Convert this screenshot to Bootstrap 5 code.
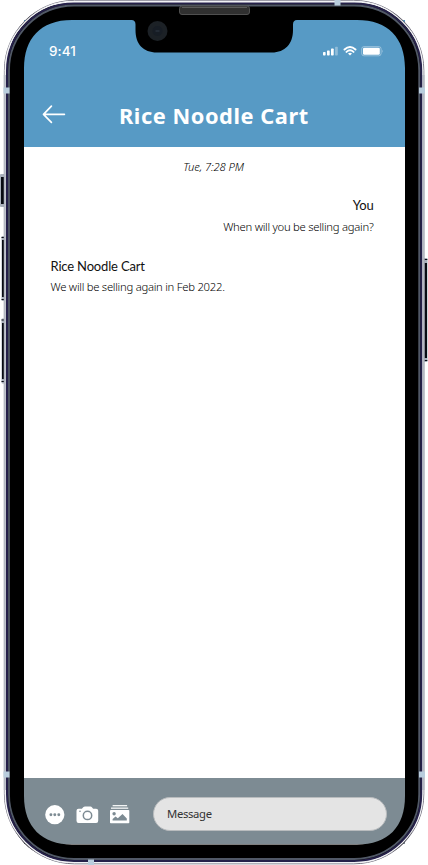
<!DOCTYPE html>
<html lang="en">
<head>
<meta charset="utf-8">
<meta name="viewport" content="width=device-width, initial-scale=1">
<title>Rice Noodle Cart</title>
<link href="https://cdn.jsdelivr.net/npm/bootstrap@5.3.0/dist/css/bootstrap.min.css" rel="stylesheet">
<style>
body{font-family:"Noto Sans",sans-serif;background:#fff}
.phone{width:428px;height:865px;padding:20px 23px 21px 24px}
.shell{left:0;top:0;width:428px;height:865px;pointer-events:none}
.screen{background:#fff}
.top-area{height:126.6px;background:#579ac5;color:#fff}
.status{height:62px;padding:0 22px 0 25px}
.clock{font:500 13.4px/1 Inter,sans-serif;letter-spacing:.1px;padding-top:1px}
.title-row{height:64px;padding-left:18px}
.title-row h1{font-size:21.8px;font-weight:700;letter-spacing:.55px;line-height:30px;padding-top:4px;width:190px;margin-left:53px}
.stamp{font-size:11.2px;letter-spacing:-.1px;line-height:15px;font-style:italic;font-weight:300;color:#000;margin-top:12.4px;padding-left:3px}
.who{font:400 13px/16px Lato,sans-serif;letter-spacing:-.17px;color:#111}
.words{font-size:11.3px;letter-spacing:-.26px;line-height:15px;font-weight:300;color:#000;margin-top:5.4px}
.thread{padding:0 31.5px 0 26.5px}
.mine{margin-top:23.2px}
.theirs{margin-top:24.2px}
.composer{height:65.6px;background:#7d8b93;padding:18.5px 18px 12px 20px}
.glyphs{margin-top:7px}
.field{width:234px;height:34px;border-radius:17px;border:1.5px solid #b9bcbe;background:#e4e4e4;font-size:11.3px;letter-spacing:-.35px;color:#333;padding-left:13px;line-height:31px}
</style>
</head>
<body>
<main class="phone position-relative overflow-hidden">
  <div class="screen d-flex flex-column h-100">
    <header class="top-area">
      <div class="status d-flex justify-content-between align-items-center">
        <span class="clock">9:41</span>
        <svg width="62" height="14" viewBox="321 44 62 14" fill="#fff">
          <rect x="323" y="52.1" width="2.6" height="3.4" rx=".7"/><rect x="327" y="50.4" width="2.7" height="5.1" rx=".7"/><rect x="331" y="48.6" width="2.7" height="6.9" rx=".7"/><rect x="335.1" y="46.8" width="2.7" height="8.7" rx=".7" opacity=".35"/>
          <path d="M344.5 49.5Q350 44.4 355.500 49.500M346.500 51.900Q350 48.800 353.500 51.900" fill="none" stroke="#fff" stroke-width="1.900" stroke-linecap="round"/><path d="M348 53.500Q350 52 352 53.500L350 55.500Z"/>
          <rect x="361.700" y="46.600" width="19.400" height="9.200" rx="2.300" fill="none" stroke="#fff" opacity=".38"/><rect x="363" y="47.800" width="16.800" height="6.900" rx="1.300"/><path d="M382 49.700q1.400 1.500 0 3z" opacity=".4"/>
        </svg>
      </div>
      <div class="title-row d-flex align-items-center">
        <svg width="24" height="20" viewBox="0 0 24 20" fill="none" stroke="#fff" stroke-width="1.7" stroke-linecap="round" stroke-linejoin="round"><path d="M22.4 10.300H1.700M9.400 2.100 1.500 10.300 9.400 18.300"/></svg>
        <h1 class="mb-0 text-nowrap">Rice Noodle Cart</h1>
      </div>
    </header>
    <section class="thread flex-grow-1">
      <p class="stamp text-center mb-0">Tue, 7:28 PM</p>
      <article class="mine text-end">
        <div class="who">You</div>
        <p class="words mb-0">When will you be selling again?</p>
      </article>
      <article class="theirs">
        <div class="who">Rice Noodle Cart</div>
        <p class="words mb-0">We will be selling again in Feb 2022.</p>
      </article>
    </section>
    <footer class="composer d-flex justify-content-between align-items-start">
      <svg width="86" height="22" viewBox="44 804 86 22" fill="#fff" class="glyphs">
        <circle cx="54.800" cy="814.700" r="9.600"/><g fill="#7d8b93"><circle cx="50.900" cy="814.700" r="1.450"/><circle cx="54.800" cy="814.700" r="1.450"/><circle cx="58.800" cy="814.700" r="1.450"/></g>
        <path d="M78.500 808.700h3.400l1.300-1.400q.8-.8 1.800-.8h5.400q1 0 1.700.9l1 1.300h3q2.100 0 2.100 2.100v10q0 2.200-2.100 2.200H78.600q-2.100 0-2.100-2.200v-10q0-2.100 2-2.100Z"/>
        <circle cx="87.500" cy="815.400" r="4.200" fill="none" stroke="#7d8b93" stroke-width="1.500"/><circle cx="80" cy="811.200" r=".8" fill="#7d8b93"/>
        <rect x="112.600" y="805.100" width="14.500" height="1.200"/><rect x="111" y="807.400" width="17.200" height="1.600" opacity=".75"/><rect x="110" y="809.900" width="19.300" height="13.300" rx=".8"/>
        <circle cx="114.100" cy="813.800" r="1.700" fill="#7d8b93"/><path d="M112.600 820.500v-1.400l3-2.600 2.200 1.800 4.700-4.300 4.300 4.400v2.100Z" fill="#7d8b93"/>
      </svg>
      <div class="field">Message</div>
    </footer>
  </div>
  <svg class="shell position-absolute" viewBox="0 0 428 865" fill="none">
    <!-- side buttons -->
    <g fill="#a9b0bb"><rect x="0" y="174" width="6" height="33" rx="1"/><rect x="1.5" y="236" width="5" height="65" rx="1"/><rect x="1.5" y="318.5" width="5" height="65" rx="1"/><rect x="423" y="258" width="4.5" height="104" rx="1"/></g>
    <g fill="#080b12"><path d="M1 177h3.500v27H1zM2 240h2.800v57H2zM2 323h2.800v56H2zM424.500 263h2.500v95h-2.500z"/><path d="M1.500 237h3v1h-3zM1.500 299h3v1h-3zM1.500 319.500h3v1h-3zM1.500 381h3v1h-3zM424.500 259h2.800v1h-2.800zM424.500 360h2.800v1h-2.800z"/></g>
    <!-- body ring between the outer edge and the screen opening -->
    <path fill="#000" fill-rule="evenodd" d="M74 3H354C398 3 421 29 421 74V792C421 836 398 861 354 861H74C30 861 7 836 7 792V74C7 29 30 3 74 3ZM72 20C40 20 24 39 24 68V796C24 827 42 844.500 72 844.500H357C388 844.500 405 827 405 796V68C405 38 388 20 357 20H297Q293 20 293 24.500V30C293 44 285 52.500 272 52.500H157C143 52.500 135.500 44 135.500 30V24.500Q135.500 20 131.500 20Z"/>
    <rect x="4.400" y=".4" width="419.400" height="863.400" rx="70" stroke="#62606f" stroke-width=".9"/>
    <rect x="5.300" y="1.600" width="417.400" height="861" rx="69" stroke="#f1f2f5" stroke-width="1.500"/>
    <path d="M4.800 75V790M423.500 75V790" stroke="#b4b8c2" stroke-width="2"/>
    <rect x="7" y="3.500" width="414.200" height="857.500" rx="67" stroke="#25204a" stroke-width="2"/>
    <rect x="9" y="5.500" width="410.200" height="853.500" rx="65" stroke="#515967" stroke-width="1.800"/>
    <g fill="#b9cddd"><path d="M3.500 87.500h6v6h-6zM419 87.500h6v6h-6zM3.500 771.500h6v6h-6zM419 771.500h6v6h-6zM334.500 0h6v5.500h-6zM88 859.500h6v5.500h-6z"/></g>
    <rect x="179.500" y="6" width="70" height="8.500" rx="2.500" fill="#303030" stroke="#505050"/><path d="M182 7.500h65" stroke="#5b5b5b"/>
    <circle cx="157.500" cy="31" r="10" fill="#1c2126"/><circle cx="157.500" cy="31" r="5" fill="#171d25"/><path d="M155.500 31h4" stroke="#303a46"/>
  </svg>
</main>
<script src="https://cdn.jsdelivr.net/npm/bootstrap@5.3.0/dist/js/bootstrap.bundle.min.js"></script>
</body>
</html>
